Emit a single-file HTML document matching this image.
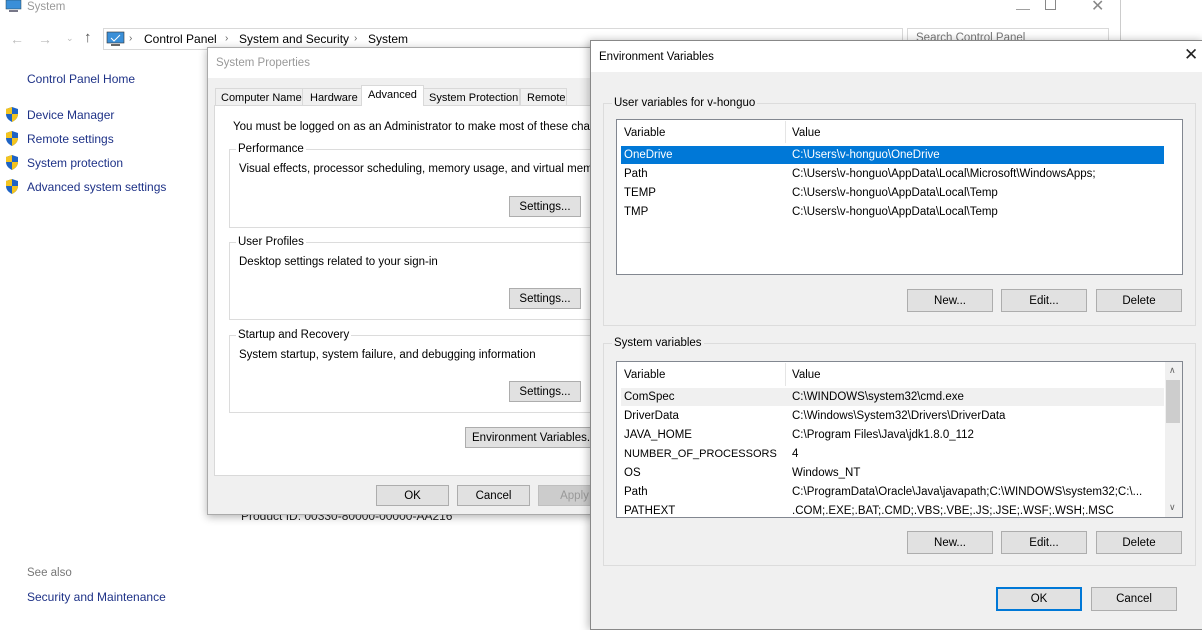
<!DOCTYPE html><html><head><style>
*{margin:0;padding:0;box-sizing:border-box}
body{width:1202px;height:624px;overflow:hidden;background:#fff;font-family:"Liberation Sans",sans-serif;font-size:11.5px;color:#000;position:relative}
.a{position:absolute;white-space:nowrap}
.t{margin-top:1px}
.btn{position:absolute;background:#e1e1e1;border:1px solid #adadad;text-align:center;font-size:11.5px;line-height:20px;white-space:nowrap;overflow:hidden}
.gb{position:absolute;border:1px solid #dcdcdc}
.gl{position:absolute;background:inherit;padding:0 2px;top:-7px;left:6px;white-space:nowrap}
.shield{position:absolute;width:14px;height:15px}
.tab{position:absolute;white-space:nowrap;overflow:hidden;border:1px solid #d9d9d9;background:#f0f0f0;font-size:11px}
</style></head><body>
<svg class="a" style="left:5px;top:0" width="18" height="14"><rect x="1" y="0" width="15" height="9" fill="#3a8fd8" stroke="#245" stroke-width="0.5"/><rect x="4" y="10" width="9" height="2" fill="#778"/></svg>
<div class="a" style="left:27px;top:1px;color:#999">System</div>
<div class="a" style="left:1016px;top:0;color:#999;font-size:14px">—</div>
<div class="a" style="left:1045px;top:-1px;width:11px;height:11px;border:1px solid #888"></div>
<div class="a" style="left:1091px;top:-4px;color:#888;font-size:16px">✕</div>
<div class="a" style="left:1120px;top:0;width:1px;height:40px;background:#ccc"></div>
<div class="a" style="left:10px;top:31px;color:#bbb;font-size:14px">←</div>
<div class="a" style="left:38px;top:31px;color:#bbb;font-size:14px">→</div>
<div class="a" style="left:66px;top:33px;color:#bbb;font-size:9px">⌄</div>
<div class="a" style="left:84px;top:29px;color:#555;font-size:15px">↑</div>
<div class="a" style="left:103px;top:28px;width:800px;height:22px;border:1px solid #d9d9d9"></div>
<svg class="a" style="left:106px;top:31px" width="20" height="16"><rect x="1" y="1" width="17" height="11" fill="#3a8fd8" stroke="#333" stroke-width="0.6"/><path d="M5 7l3 3 6-6" stroke="#fff" fill="none"/><rect x="5" y="13" width="9" height="2" fill="#666"/></svg>
<div class="a" style="left:129px;top:33px;color:#666;font-size:10px">›</div>
<div class="a" style="left:144px;top:32px;font-size:12px">Control Panel</div>
<div class="a" style="left:225px;top:33px;color:#666;font-size:10px">›</div>
<div class="a" style="left:239px;top:32px;font-size:12px">System and Security</div>
<div class="a" style="left:354px;top:33px;color:#666;font-size:10px">›</div>
<div class="a" style="left:368px;top:32px;font-size:12px">System</div>
<div class="a" style="left:907px;top:28px;width:202px;height:22px;border:1px solid #d9d9d9"></div>
<div class="a" style="left:916px;top:32px;color:#777">Search Control Panel</div>
<div class="a" style="left:27px;top:72px;font-size:12px;color:#1e3287">Control Panel Home</div>
<svg class="shield" style="left:5px;top:107px" viewBox="0 0 14 15"><path d="M7 0L1 2v5c0 4 3 6.5 6 8 3-1.5 6-4 6-8V2z" fill="#1e63c4"/><path d="M7 0v7H1V2zM7 7h6c0 4-3 6.5-6 8z" fill="#f3c420"/></svg>
<svg class="shield" style="left:5px;top:131px" viewBox="0 0 14 15"><path d="M7 0L1 2v5c0 4 3 6.5 6 8 3-1.5 6-4 6-8V2z" fill="#1e63c4"/><path d="M7 0v7H1V2zM7 7h6c0 4-3 6.5-6 8z" fill="#f3c420"/></svg>
<svg class="shield" style="left:5px;top:155px" viewBox="0 0 14 15"><path d="M7 0L1 2v5c0 4 3 6.5 6 8 3-1.5 6-4 6-8V2z" fill="#1e63c4"/><path d="M7 0v7H1V2zM7 7h6c0 4-3 6.5-6 8z" fill="#f3c420"/></svg>
<svg class="shield" style="left:5px;top:179px" viewBox="0 0 14 15"><path d="M7 0L1 2v5c0 4 3 6.5 6 8 3-1.5 6-4 6-8V2z" fill="#1e63c4"/><path d="M7 0v7H1V2zM7 7h6c0 4-3 6.5-6 8z" fill="#f3c420"/></svg>
<div class="a" style="left:27px;top:108px;font-size:12px;color:#1e3287">Device Manager</div>
<div class="a" style="left:27px;top:132px;font-size:12px;color:#1e3287">Remote settings</div>
<div class="a" style="left:27px;top:156px;font-size:12px;color:#1e3287">System protection</div>
<div class="a" style="left:27px;top:180px;font-size:12px;color:#1e3287">Advanced system settings</div>
<div class="a" style="left:27px;top:567px;color:#777">See also</div>
<div class="a" style="left:27px;top:590px;font-size:12px;color:#1e3287">Security and Maintenance</div>
<div class="a" style="left:241px;top:509px;font-size:12px;color:#222">Product ID: 00330-80000-00000-AA216</div>

<div class="a" style="left:207px;top:47px;width:390px;height:468px;background:#f0f0f0;border:1px solid #aaa;box-shadow:0 2px 8px rgba(0,0,0,.3)"></div>
<div class="a" style="left:208px;top:48px;width:388px;height:30px;background:#fff"></div>
<div class="a" style="left:216px;top:57px;color:#999">System Properties</div>
<div class="a" style="left:214px;top:105px;width:380px;height:371px;background:#fff;border:1px solid #d9d9d9"></div>
<div class="tab" style="left:215px;top:88px;width:88px;height:18px;padding:3px 0 0 5px">Computer Name</div>
<div class="tab" style="left:302px;top:88px;width:60px;height:18px;padding:3px 0 0 7px">Hardware</div>
<div class="tab" style="left:361px;top:85px;width:63px;height:21px;border-bottom:none;background:#fff;padding:3px 0 0 6px">Advanced</div>
<div class="tab" style="left:423px;top:88px;width:97px;height:18px;padding:3px 0 0 5px">System Protection</div>
<div class="tab" style="left:520px;top:88px;width:47px;height:18px;padding:3px 0 0 6px">Remote</div>
<div class="a" style="left:233px;top:121px">You must be logged on as an Administrator to make most of these changes.</div>
<div class="gb" style="left:229px;top:149px;width:370px;height:79px;background:#fff"><span class="gl">Performance</span></div>
<div class="a" style="left:239px;top:163px">Visual effects, processor scheduling, memory usage, and virtual memory</div>
<div class="btn" style="left:509px;top:196px;width:72px;height:21px">Settings...</div>
<div class="gb" style="left:229px;top:242px;width:370px;height:78px;background:#fff"><span class="gl">User Profiles</span></div>
<div class="a" style="left:239px;top:256px">Desktop settings related to your sign-in</div>
<div class="btn" style="left:509px;top:288px;width:72px;height:21px">Settings...</div>
<div class="gb" style="left:229px;top:335px;width:370px;height:78px;background:#fff"><span class="gl">Startup and Recovery</span></div>
<div class="a" style="left:239px;top:349px">System startup, system failure, and debugging information</div>
<div class="btn" style="left:509px;top:381px;width:72px;height:21px">Settings...</div>
<div class="btn" style="left:465px;top:427px;width:130px;height:21px;text-align:left;padding-left:6px">Environment Variables...</div>
<div class="btn" style="left:376px;top:485px;width:73px;height:21px">OK</div>
<div class="btn" style="left:457px;top:485px;width:73px;height:21px">Cancel</div>
<div class="btn" style="left:538px;top:485px;width:73px;height:21px;color:#999;background:#ccc;border-color:#bfbfbf">Apply</div>

<div class="a" style="left:590px;top:40px;width:614px;height:590px;background:#f0f0f0;border:1px solid #888;box-shadow:-2px 0 8px rgba(0,0,0,.25)"></div>
<div class="a" style="left:591px;top:41px;width:612px;height:31px;background:#fff"></div>
<div class="a" style="left:599px;top:51px">Environment Variables</div>
<div class="a" style="left:1184px;top:45px;font-size:17px;color:#222">✕</div>
<div class="gb" style="left:603px;top:103px;width:593px;height:223px;background:#f0f0f0"><span class="gl" style="left:8px">User variables for v-honguo</span></div>
<div class="a" style="left:616px;top:119px;width:567px;height:156px;background:#fff;border:1px solid #828790"></div>
<div class="a" style="left:785px;top:121px;width:1px;height:22px;background:#e5e5e5"></div>
<div class="a" style="left:624px;top:127px">Variable</div>
<div class="a" style="left:792px;top:127px">Value</div>
<div class="a" style="left:621px;top:146px;width:543px;height:18px;background:#0078d7"></div>
<div class="a" style="left:624px;top:149px;color:#fff">OneDrive</div><div class="a" style="left:792px;top:149px;color:#fff">C:\Users\v-honguo\OneDrive</div>
<div class="a" style="left:624px;top:168px">Path</div><div class="a" style="left:792px;top:168px">C:\Users\v-honguo\AppData\Local\Microsoft\WindowsApps;</div>
<div class="a" style="left:624px;top:187px">TEMP</div><div class="a" style="left:792px;top:187px">C:\Users\v-honguo\AppData\Local\Temp</div>
<div class="a" style="left:624px;top:206px">TMP</div><div class="a" style="left:792px;top:206px">C:\Users\v-honguo\AppData\Local\Temp</div>
<div class="btn" style="left:907px;top:289px;width:86px;height:23px;line-height:22px">New...</div>
<div class="btn" style="left:1001px;top:289px;width:86px;height:23px;line-height:22px">Edit...</div>
<div class="btn" style="left:1096px;top:289px;width:86px;height:23px;line-height:22px">Delete</div>

<div class="gb" style="left:603px;top:343px;width:593px;height:223px;background:#f0f0f0"><span class="gl" style="left:8px">System variables</span></div>
<div class="a" style="left:616px;top:361px;width:567px;height:157px;background:#fff;border:1px solid #828790"></div>
<div class="a" style="left:785px;top:363px;width:1px;height:23px;background:#e5e5e5"></div>
<div class="a" style="left:1165px;top:362px;width:17px;height:155px;background:#f0f0f0"></div>
<div class="a" style="left:1166px;top:380px;width:14px;height:43px;background:#cdcdcd"></div>
<div class="a" style="left:1169px;top:365px;font-size:9px;color:#666">∧</div>
<div class="a" style="left:1169px;top:502px;font-size:9px;color:#666">∨</div>
<div class="a" style="left:624px;top:369px">Variable</div>
<div class="a" style="left:792px;top:369px">Value</div>
<div class="a" style="left:621px;top:388px;width:543px;height:18px;background:#f0f0f0"></div>
<div class="a" style="left:624px;top:391px">ComSpec</div><div class="a" style="left:792px;top:391px">C:\WINDOWS\system32\cmd.exe</div>
<div class="a" style="left:624px;top:410px">DriverData</div><div class="a" style="left:792px;top:410px">C:\Windows\System32\Drivers\DriverData</div>
<div class="a" style="left:624px;top:429px">JAVA_HOME</div><div class="a" style="left:792px;top:429px">C:\Program Files\Java\jdk1.8.0_112</div>
<div class="a" style="left:624px;top:448px;font-size:11px">NUMBER_OF_PROCESSORS</div><div class="a" style="left:792px;top:448px">4</div>
<div class="a" style="left:624px;top:467px">OS</div><div class="a" style="left:792px;top:467px">Windows_NT</div>
<div class="a" style="left:624px;top:486px">Path</div><div class="a" style="left:792px;top:486px">C:\ProgramData\Oracle\Java\javapath;C:\WINDOWS\system32;C:\...</div>
<div class="a" style="left:617px;top:502px;width:547px;height:15px;overflow:hidden"><div class="a" style="left:7px;top:3px">PATHEXT</div><div class="a" style="left:175px;top:3px">.COM;.EXE;.BAT;.CMD;.VBS;.VBE;.JS;.JSE;.WSF;.WSH;.MSC</div></div>
<div class="btn" style="left:907px;top:531px;width:86px;height:23px;line-height:22px">New...</div>
<div class="btn" style="left:1001px;top:531px;width:86px;height:23px;line-height:22px">Edit...</div>
<div class="btn" style="left:1096px;top:531px;width:86px;height:23px;line-height:22px">Delete</div>
<div class="btn" style="left:996px;top:587px;width:86px;height:24px;line-height:20px;border:2px solid #0078d7">OK</div>
<div class="btn" style="left:1091px;top:587px;width:86px;height:24px;line-height:22px">Cancel</div>
</body></html>
